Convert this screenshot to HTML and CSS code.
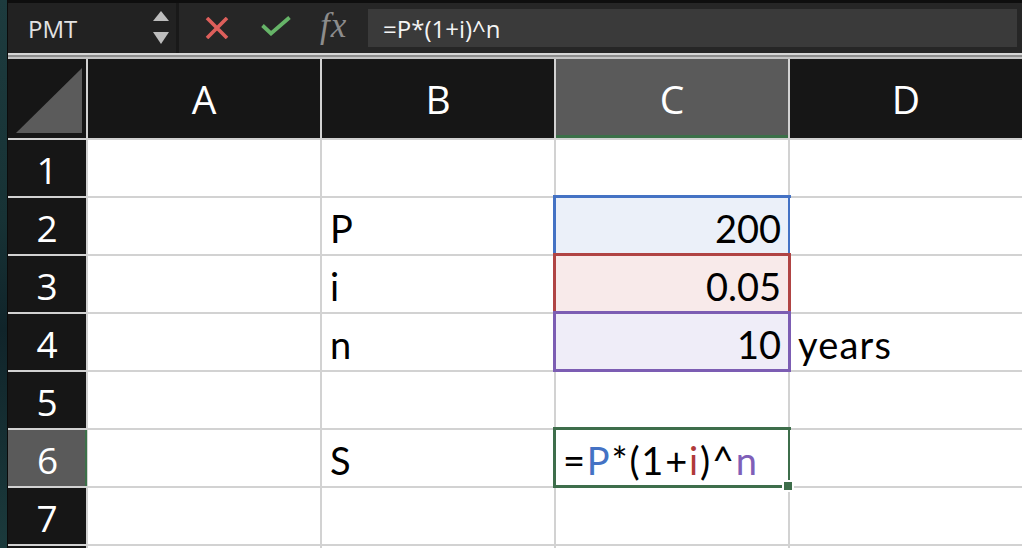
FILE: index.html
```html
<!DOCTYPE html>
<html>
<head>
<meta charset="utf-8">
<link rel="stylesheet" href="styles.css">
</head>
<body>
<div class="screen">
  <div class="edge"></div>
  <div class="app">
    <div class="fbar">
      <div class="namebox">
        <span class="name">PMT</span>
        <span class="spin">
          <svg width="16" height="34" viewBox="0 0 16 34"><polygon points="8,0 16,10 0,10" fill="#bdbdbd"/><polygon points="0,21 16,21 8,33" fill="#bdbdbd"/></svg>
        </span>
      </div>
      <div class="tools">
        <svg class="ic-x" width="24" height="22" viewBox="0 0 24 22"><path d="M2 1 L22 21 M22 1 L2 21" stroke="#dd5f5b" stroke-width="3.6" stroke-linecap="butt"/></svg>
        <svg class="ic-ok" width="30" height="20" viewBox="0 0 30 20"><path d="M1.5 9.5 L10 17.5 L28.5 1.5" fill="none" stroke="#66b468" stroke-width="3.8"/></svg>
        <span class="fx">fx</span>
      </div>
      <div class="finput">=P*(1+i)^n</div>
    </div>
    <div class="sep"></div>
    <div class="grid">
      <div class="corner"><div class="tri"></div></div>
      <div class="ch">A</div>
      <div class="ch">B</div>
      <div class="ch sel">C</div>
      <div class="ch">D</div>

      <div class="rh">1</div>
      <div class="c"></div><div class="c"></div><div class="c"></div><div class="c"></div>

      <div class="rh">2</div>
      <div class="c"></div><div class="c">P</div><div class="c num ref blue">200</div><div class="c"></div>

      <div class="rh">3</div>
      <div class="c"></div><div class="c">i</div><div class="c num ref red">0.05</div><div class="c"></div>

      <div class="rh">4</div>
      <div class="c"></div><div class="c">n</div><div class="c num ref purple">10</div><div class="c">years</div>

      <div class="rh">5</div>
      <div class="c"></div><div class="c"></div><div class="c"></div><div class="c"></div>

      <div class="rh sel">6</div>
      <div class="c"></div><div class="c">S</div><div class="c active">=<span class="t-p">P</span>*(1+<span class="t-i">i</span>)^<span class="t-n">n</span><span class="handle"></span></div><div class="c"></div>

      <div class="rh">7</div>
      <div class="c"></div><div class="c"></div><div class="c"></div><div class="c"></div>

      <div class="rh"></div>
      <div class="c"></div><div class="c"></div><div class="c"></div><div class="c"></div>
    </div>
  </div>
</div>
</body>
</html>
```

FILE: styles.css
```css
html, body {
  margin: 0;
  padding: 0;
  background: #111;
}
.screen {
  display: flex;
  width: 1022px;
  height: 548px;
  overflow: hidden;
}
.edge {
  width: 7px;
  flex: none;
  background: linear-gradient(180deg, #1d3b3e 0%, #173235 40%, #10242a 60%, #1b3a3c 100%);
  border-right: 1px solid #0b0b0b;
}
.app {
  flex: 1;
  display: flex;
  flex-direction: column;
  overflow: hidden;
}
.fbar {
  height: 50px;
  border-top: 3px solid #0e0e0e;
  background: #262626;
  display: flex;
  align-items: center;
  flex: none;
}
.namebox {
  width: 168px;
  height: 50px;
  background: #222;
  border-right: 3px solid #191919;
  display: flex;
  align-items: center;
  flex: none;
}
.name {
  font-family: "Open Sans", sans-serif;
  font-size: 24px;
  color: #e2e2e2;
  margin-left: 20px;
  width: 125px;
}
.spin {
  display: flex;
}
.spin svg { display: block; }
.tools {
  display: flex;
  align-items: center;
  height: 50px;
  width: 189px;
  flex: none;
}
.ic-x { margin-left: 26px; }
.ic-ok { margin-left: 32px; margin-top: -4px; }
.fx {
  font-family: "Liberation Serif", serif;
  font-style: italic;
  font-size: 35px;
  color: #8c8c8c;
  margin-left: 29px;
  margin-top: -4px;
  letter-spacing: 1px;
}
.finput {
  flex: 1;
  height: 38px;
  margin-right: 5px;
  background: #3a3a3a;
  display: flex;
  align-items: center;
  padding-left: 15px;
  font-family: "Open Sans", sans-serif;
  font-size: 24px;
  color: #f4f4f4;
}
.sep {
  height: 2px;
  flex: none;
  background: #d6d6d6;
  border-bottom: 2px solid #8e8e8e;
  box-shadow: 0 2px 0 #c4c4c4;
  margin-bottom: 2px;
}
.grid {
  display: grid;
  grid-template-columns: 78px 232px 232px 232px 1fr;
  grid-template-rows: 79px repeat(8, 56px);
  gap: 2px;
  background: #d2d2d2;
  flex: none;
}
.corner {
  background: #161616;
  position: relative;
}
.tri {
  position: absolute;
  left: 8px;
  top: 9px;
  width: 66px;
  height: 65px;
  background: #5b5b5b;
  clip-path: polygon(100% 0, 100% 100%, 0 100%);
}
.ch {
  background: #161616;
  color: #fff;
  font-family: "Open Sans", sans-serif;
  font-size: 39px;
  display: flex;
  align-items: center;
  justify-content: center;
}
.ch.sel {
  background: #5a5a5a;
  box-shadow: inset 0 -3px 0 #3b7048;
}
.rh {
  background: #161616;
  color: #fff;
  font-family: "Open Sans", sans-serif;
  font-size: 37px;
  display: flex;
  align-items: center;
  justify-content: center;
  padding-top: 3px;
}
.rh.sel {
  background: #5a5a5a;
  box-shadow: inset -2px 0 0 #3b7048;
  margin-right: -1px;
}
.c {
  background: #fff;
  font-family: Lato, "Open Sans", sans-serif;
  font-size: 38px;
  color: #000;
  display: flex;
  align-items: center;
  padding: 4px 8px 0 8px;
  white-space: nowrap;
  position: relative;
  letter-spacing: 1.2px;
}
.c.num {
  justify-content: flex-end;
  padding-right: 7px;
  letter-spacing: 0;
}
.c.active {
  letter-spacing: 1.8px;
  padding-left: 7px;
}
.ref::after, .active::after {
  content: "";
  position: absolute;
  top: -3px;
  left: -3px;
  right: -3px;
  bottom: -2px;
  border: 3px solid;
  pointer-events: none;
}
.blue { background: #ebf0f9; }
.blue::after { border-color: #4472c4; }
.red { background: #f8eaea; z-index: 1; }
.red::after { border-color: #b04444; }
.purple { background: #efedf8; z-index: 2; }
.purple::after { border-color: #7c5db3; }
.active::after { border-color: #3e6e4b; }
.t-p { color: #4472c4; }
.t-i { color: #b03a3a; }
.t-n { color: #7f5fb8; }
.handle {
  position: absolute;
  right: -6px;
  bottom: -6px;
  width: 8px;
  height: 8px;
  background: #3e6e4b;
  border: 2px solid #fff;
  z-index: 3;
}
```
